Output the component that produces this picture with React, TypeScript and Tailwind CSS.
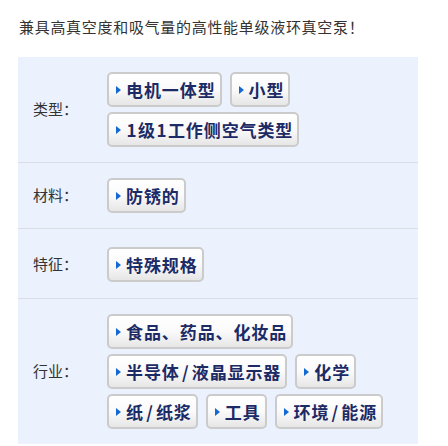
import React from "react";

const font = "font-['Noto_Sans_CJK_SC','Noto_Sans',sans-serif]";

type Row = { label: string; items: string[]; pad: string };

const rows: Row[] = [
  { label: "类型", items: ["电机一体型", "小型", "1级1工作侧空气类型"], pad: "py-[15px]" },
  { label: "材料", items: ["防锈的"], pad: "py-[15px]" },
  { label: "特征", items: ["特殊规格"], pad: "pt-[18px] pb-[16px]" },
  {
    label: "行业",
    items: ["食品、药品、化妆品", "半导体/液晶显示器", "化学", "纸/纸浆", "工具", "环境/能源"],
    pad: "py-[15px]",
  },
];

// ASCII chars in the tags are set wider, like the source font
function TagText({ text }: { text: string }) {
  return (
    <>
      {text.split("").map((ch, i) =>
        ch === "/" || ch === "1" ? (
          <span key={i} className="inline-block w-[12px] text-center">
            {ch}
          </span>
        ) : (
          <span key={i}>{ch}</span>
        )
      )}
    </>
  );
}

function Tag({ text }: { text: string }) {
  return (
    <a
      href="#"
      className="flex items-center h-[35px] pl-[7px] pr-[4px] border-2 border-[#cbcbcb] rounded-[5px] bg-gradient-to-b from-white via-[#fafafa] to-[#e6e6e6]"
    >
      <svg width="5" height="8" viewBox="0 0 5 8" className="shrink-0">
        <path d="M0 0 L5 4 L0 8 Z" fill="#1369d1" />
      </svg>
      <span className="ml-[5px] text-[17px] leading-none font-bold tracking-[0.9px] text-[#1c2a66]">
        <TagText text={text} />
      </span>
    </a>
  );
}

export default function App() {
  return (
    <div className={`bg-white w-[448px] h-[446px] overflow-hidden ${font}`}>
      <p className="pt-[17px] pl-[19px] text-[15px] leading-[20px] tracking-[0.7px] text-[#333]">
        兼具高真空度和吸气量的高性能单级液环真空泵！
      </p>
      <div className="mt-[20px] ml-[18px] w-[400px] bg-[#ebf1fd]">
        {rows.map((row, i) => (
          <div
            key={row.label}
            className={`flex items-center ${row.pad} ${i > 0 ? "border-t border-[#dadde3]" : ""}`}
          >
            <div className="w-[89px] shrink-0 pl-[15px] text-[15px] text-[#333]">{row.label}：</div>
            <div className="flex flex-wrap gap-x-2 gap-y-[5px] pr-2">
              {row.items.map((it) => (
                <Tag key={it} text={it} />
              ))}
            </div>
          </div>
        ))}
      </div>
    </div>
  );
}
